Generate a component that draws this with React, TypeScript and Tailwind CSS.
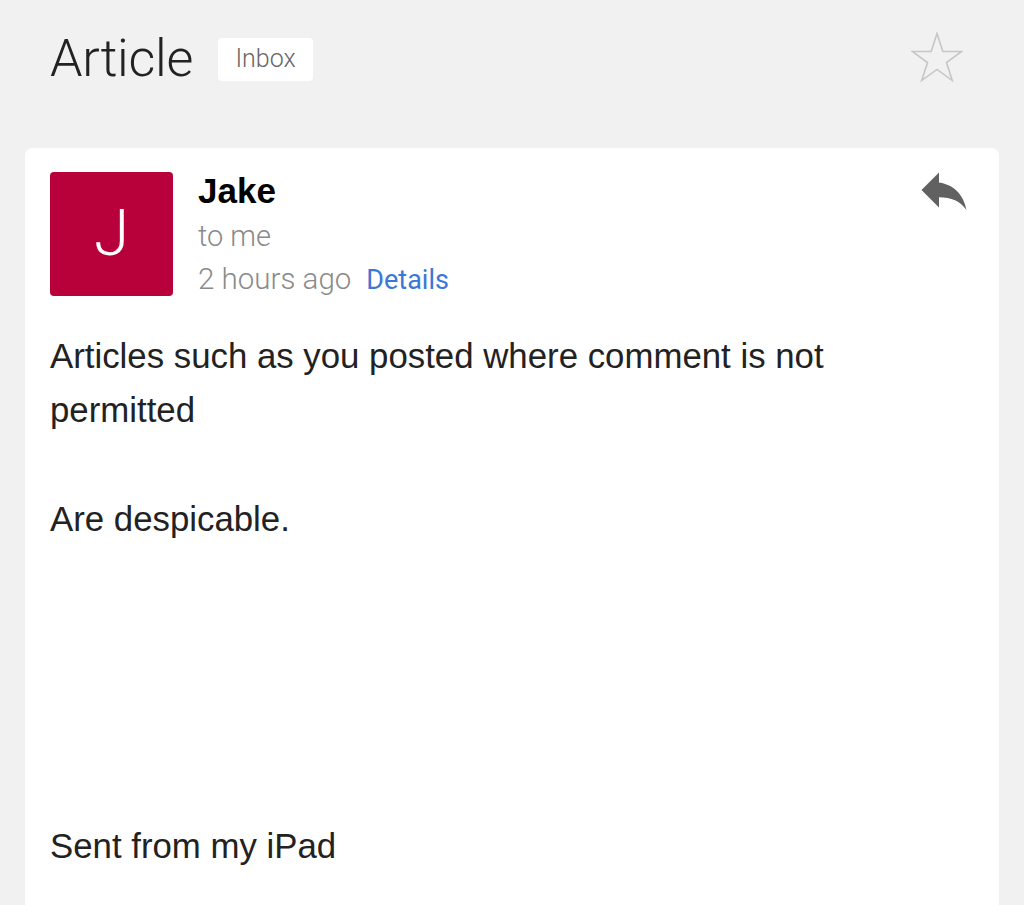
import React from 'react';

const Star: React.FC = () => (
  <svg width="52" height="52" viewBox="0 0 52 52" className="-mt-[3px]">
    <polygon
      points="26,1.5 31.84,19.47 50.73,19.47 35.44,30.57 41.28,48.53 26,37.43 10.72,48.53 16.56,30.57 1.27,19.47 20.16,19.47"
      fill="none"
      stroke="#c6c6c6"
      strokeWidth="1.6"
      strokeLinejoin="miter"
    />
  </svg>
);

const ReplyIcon: React.FC = () => (
  <svg width="60" height="60" viewBox="0 0 24 24" className="-mt-[12px] shrink-0">
    <path fill="#616161" d="M10 9V5l-7 7 7 7v-4.1c5 0 8.5 1.6 11 5.1-1-5-4-10-11-11z" />
  </svg>
);

const App: React.FC = () => {
  const body = [
    'Articles such as you posted where comment is not permitted',
    '',
    'Are despicable.',
    '',
    '',
    '',
    '',
    '',
    'Sent from my iPad',
  ];

  return (
    <div className="min-h-screen bg-[#f1f1f1] font-['Liberation_Sans',Arial,sans-serif] overflow-hidden">
      <header className="h-[118px] pl-[50px] pr-[61px] flex items-center">
        <h1 className="font-['Roboto',sans-serif] font-light text-[52px] leading-none text-[#222] tracking-[-0.3px]">
          Article
        </h1>
        <span className="ml-[25px] bg-white rounded-[4px] h-[43px] w-[95px] flex items-center justify-center font-['Roboto',sans-serif] font-light text-[25px] text-[#666]">
          Inbox
        </span>
        <div className="ml-auto">
          <Star />
        </div>
      </header>

      <main className="mt-[30px] mx-[25px] bg-white rounded-t-[7px] px-[25px] pt-[24px] pb-[40px]">
        <div className="flex">
          <div className="w-[123px] h-[124px] rounded-[4px] bg-[#b8003a] flex items-center justify-center shrink-0">
            <span className="font-['Roboto',sans-serif] font-light text-[64px] leading-none text-white">J</span>
          </div>
          <div className="ml-[25px] flex-1">
            <div className="text-[35px] font-bold leading-[38px] text-black">Jake</div>
            <div className="mt-[4px] font-['Roboto',sans-serif] font-light text-[29px] leading-[44px] text-[#8a8a8a]">
              to me
            </div>
            <div className="font-['Roboto',sans-serif] font-light text-[29.5px] leading-[42px] text-[#8a8a8a]">
              2 hours ago
              <span className="ml-[15px] text-[27px] font-normal text-[#3d77d6]">Details</span>
            </div>
          </div>
          <ReplyIcon />
        </div>

        <div className="mt-[28px] text-[34.8px] leading-[54.4px] text-[#222] max-w-[860px]">
          {body.map((line, i) => (
            <p key={i} className="min-h-[54.4px]">
              {line}
            </p>
          ))}
        </div>
      </main>
    </div>
  );
};

export default App;
